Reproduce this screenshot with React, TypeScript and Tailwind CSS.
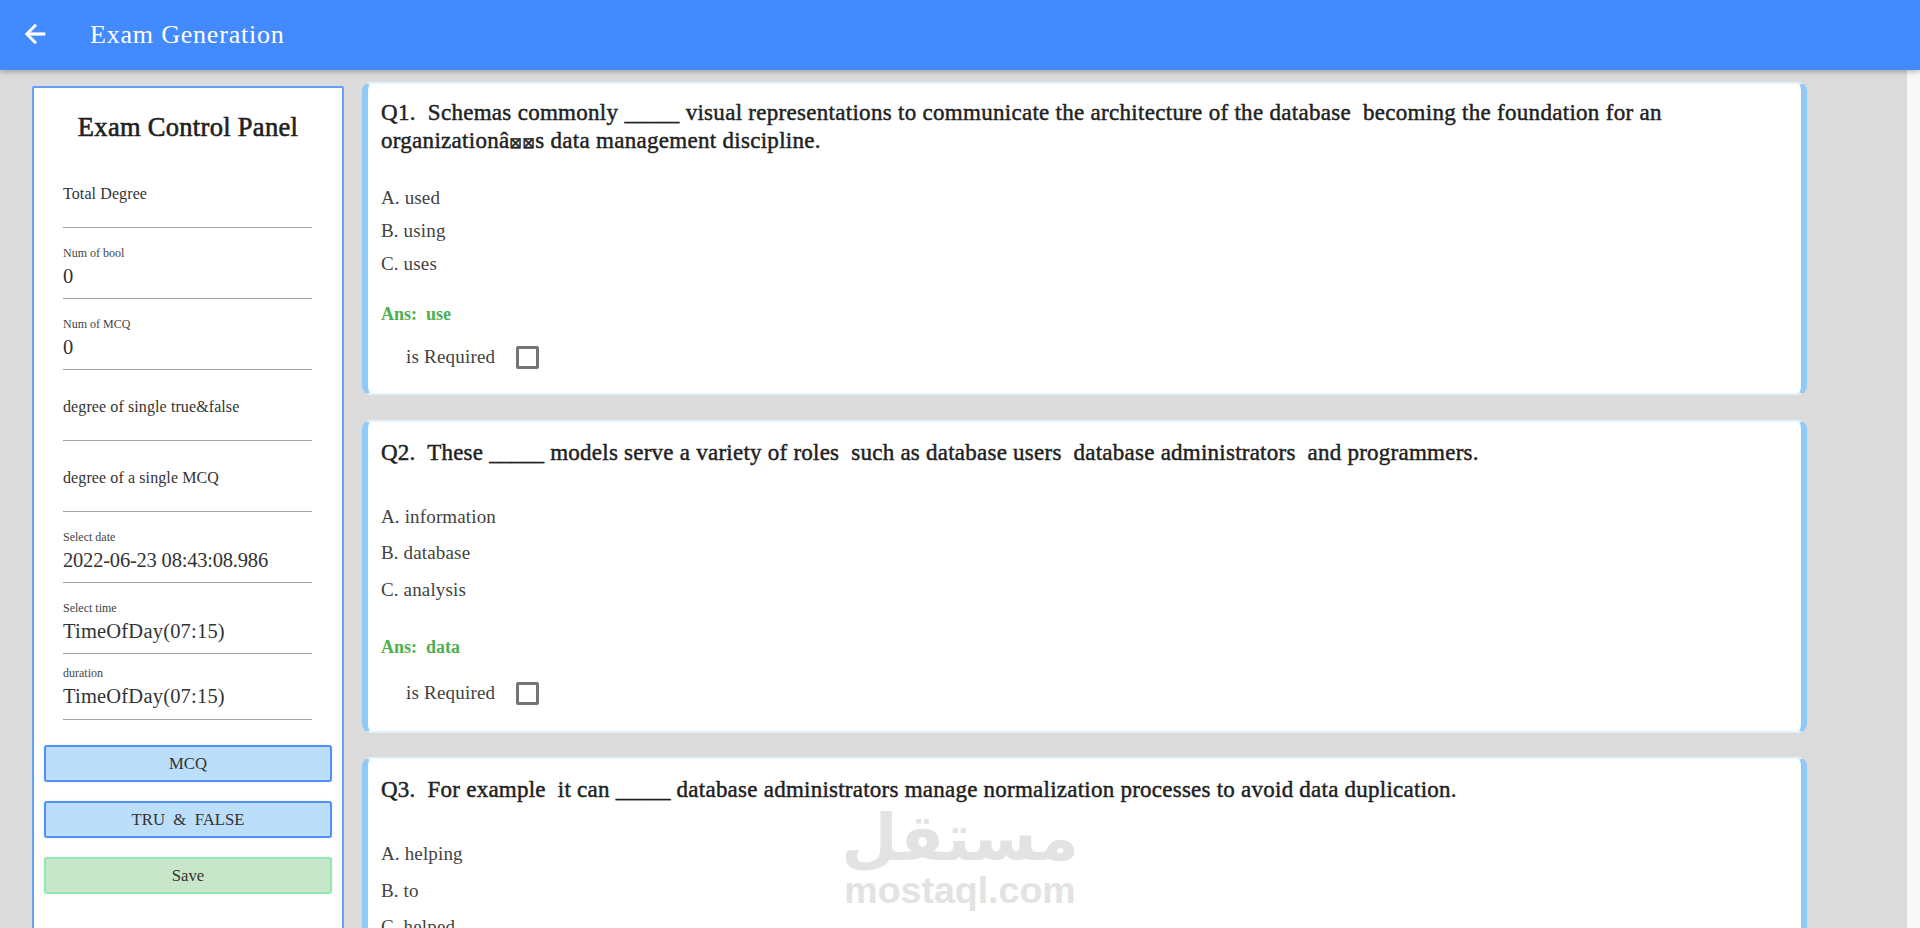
import React from "react";

const serif = "font-['Liberation_Serif',serif]";

function Blank() {
  return <span className="text-[21.5px]">_____</span>;
}

function Field({ label, value, last, tight }: { label: string; value?: string; last?: boolean; tight?: boolean }) {
  return (
    <div className={`ml-[29px] mr-[30px] border-b border-[#a3a3a3] ${last ? "h-[66px]" : "h-[71px]"}`}>
      {value ? (
        <div className={last ? "pt-[12px]" : "pt-[18px]"}>
          <div className="text-[12px] leading-[14px] text-[#444]">{label}</div>
          <div className={`text-[20.5px] leading-[26px] mt-[3px] text-[#333] ${tight ? "tracking-[-0.2px]" : "tracking-[0.2px]"}`}>{value}</div>
        </div>
      ) : (
        <div className="text-[16px] leading-[20px] pt-[27px] text-[#333] tracking-[0.1px]">{label}</div>
      )}
    </div>
  );
}

function PanelButton({ children, green }: { children: React.ReactNode; green?: boolean }) {
  return (
    <div
      className={`h-[37px] rounded-[3px] border-2 flex items-center justify-center text-[16.7px] text-[#333] whitespace-pre shadow-[0_0_4px_rgba(0,0,0,0.06)] ${
        green ? "bg-[#c8e6c9] border-[#8fe8b4]" : "bg-[#bbdefb] border-[#4f8ff7]"
      }`}
    >
      {children}
    </div>
  );
}

function Card({
  title,
  options,
  answer,
  roomy,
}: {
  title: React.ReactNode;
  options: string[];
  answer: string;
  roomy?: boolean;
}) {
  return (
    <div className="h-[313px] shrink-0 bg-white rounded-[9px] border-x-[6px] border-y-2 border-x-[#90caf9] border-y-[#e3f2fd] pl-[13px] pr-[12px] overflow-hidden">
      <div className={`text-[23px] leading-[27px] text-[#212121] [-webkit-text-stroke:0.45px_#212121] whitespace-pre-wrap ${roomy ? "h-[77px] pt-[17px] tracking-[0.24px]" : "h-[97px] pt-[15px] tracking-[0.29px]"}`}>
        {title}
      </div>
      <div>
        {options.map((o) => (
          <div key={o} className={`text-[19px] text-[#424242] tracking-[0.15px] ${roomy ? "h-[36.5px] leading-[36.5px]" : "h-[33px] leading-[33px]"}`}>
            {o}
          </div>
        ))}
      </div>
      <div className={`text-[18px] font-bold text-[#4caf50] whitespace-pre leading-[24px] ${roomy ? "mt-[27px]" : "mt-[22px]"}`}>
        {`Ans:  ${answer}`}
      </div>
      <div className={`flex items-center ml-[25px] ${roomy ? "mt-[20px]" : "mt-[17px]"}`}>
        <span className="text-[19px] text-[#424242] tracking-[0.2px] w-[110px]">is Required</span>
        <span className="w-[23px] h-[23px] border-[3px] border-[#757575] rounded-[2px]"></span>
      </div>
    </div>
  );
}

export default function App() {
  return (
    <div className={`${serif} h-[928px] w-[1920px] overflow-hidden bg-[#dbdbdb] flex flex-col relative`}>
      <header className="h-[70px] shrink-0 bg-[#448aff] flex items-center pb-[2px] shadow-[0_2px_5px_rgba(0,0,0,0.25)] z-10">
        <svg viewBox="0 0 24 24" className="w-[30px] h-[30px] ml-[20px]" fill="#fff" stroke="#fff" strokeWidth="0.5">
          <path d="M20 11H7.83l5.59-5.59L12 4l-8 8 8 8 1.41-1.41L7.83 13H20v-2z" />
        </svg>
        <span className="ml-[40px] text-[26px] text-white tracking-[0.8px]">Exam Generation</span>
      </header>
      <div className="flex flex-1 min-h-0">
        <div className="flex-1 flex min-w-0 pl-[32px] pt-[12px]">
          <aside className="w-[312px] shrink-0 mt-[4px] bg-white border-2 border-[#64a0fa] rounded-[2px] h-[900px]">
            <h2 className="text-[26.5px] leading-[30px] text-center text-[#212121] [-webkit-text-stroke:0.6px_#212121] mt-[24px] mb-[15px] tracking-[0.3px]">
              Exam Control Panel
            </h2>
            <div>
              <Field label="Total Degree" />
              <Field label="Num of bool" value="0" />
              <Field label="Num of MCQ" value="0" />
              <Field label="degree of single true&false" />
              <Field label="degree of a single MCQ" />
              <Field label="Select date" value="2022-06-23 08:43:08.986" tight />
              <Field label="Select time" value="TimeOfDay(07:15)" />
              <Field label="duration" value="TimeOfDay(07:15)" last />
            </div>
            <div className="mx-[10px] mt-[25px] flex flex-col gap-[19px]">
              <PanelButton>MCQ</PanelButton>
              <PanelButton>{"TRU  &  FALSE"}</PanelButton>
              <PanelButton green>Save</PanelButton>
            </div>
          </aside>
          <main className="w-[1445px] ml-[18px] flex flex-col gap-[24.5px]">
            <Card
              title={
                <>
                  {"Q1.  Schemas commonly "}
                  <Blank />
                  {" visual representations to communicate the architecture of the database  becoming the foundation for an organization\u00e2"}
                  <span className="font-['DejaVu_Sans',sans-serif] text-[15px]">{"\u22a0\u22a0"}</span>
                  {"s data management discipline."}
                </>
              }
              options={["A. used", "B. using", "C. uses"]}
              answer="use"
            />
            <Card
              roomy
              title={
                <>
                  {"Q2.  These "}
                  <Blank />
                  {" models serve a variety of roles  such as database users  database administrators  and programmers."}
                </>
              }
              options={["A. information", "B. database", "C. analysis"]}
              answer="data"
            />
            <Card
              roomy
              title={
                <>
                  {"Q3.  For example  it can "}
                  <Blank />
                  {" database administrators manage normalization processes to avoid data duplication."}
                </>
              }
              options={["A. helping", "B. to", "C. helped"]}
              answer="help"
            />
          </main>
        </div>
        <div className="w-[13px] shrink-0 bg-[#f8f8f8]"></div>
      </div>
      <div className="absolute left-[843px] top-[808px] w-[234px] flex flex-col items-center pointer-events-none text-[#e3e3e3]">
        <div dir="rtl" className="font-['DejaVu_Sans',sans-serif] font-bold text-[65px] leading-[60px] h-[60px]">مستقل</div>
        <div className="font-['Liberation_Sans',sans-serif] font-bold text-[37.5px] leading-[40px] mt-[2px]">mostaql.com</div>
      </div>
    </div>
  );
}
